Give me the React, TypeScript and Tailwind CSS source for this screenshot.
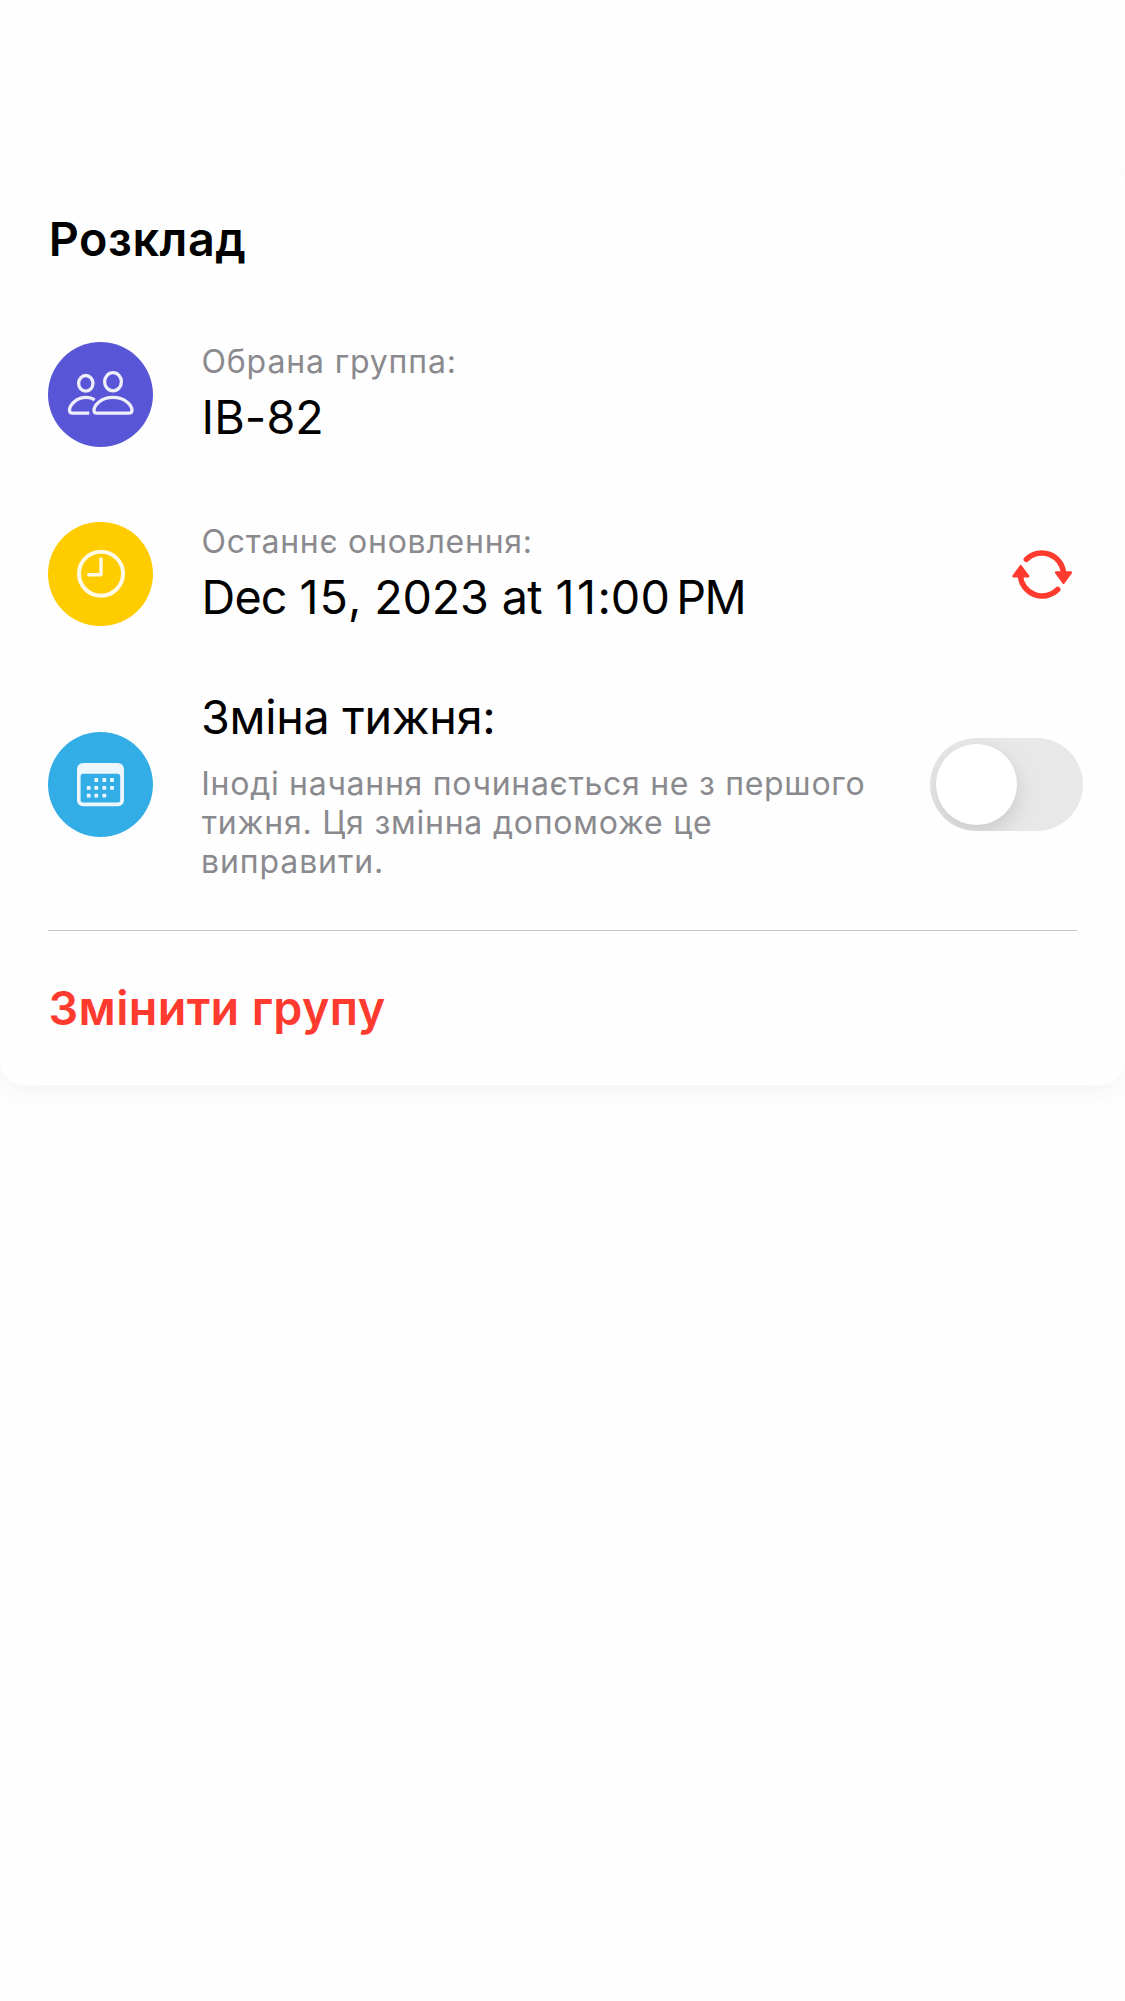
import type { ReactNode } from "react";

function PeopleIcon() {
  return (
    <svg className="h-full w-full" viewBox="0 0 105 105" fill="none" stroke="#eeeefb" strokeWidth="3.3">
      <ellipse cx="37.8" cy="41.3" rx="7.2" ry="7.8" />
      <ellipse cx="65" cy="39.7" rx="8.4" ry="9.1" />
      <path d="M41.3 71.2H24.7C22.6 71.2 21.5 70 21.5 68.2 21.5 63.2 28 55.4 38.3 55.4 41.8 55.4 44.5 56.3 46.6 57.8" />
      <path d="M49 71.2H80.8C82.9 71.2 84 70 84 68.2 84 63.2 77 55.4 65 55.4S46 63.2 46 68.2C46 70 47.1 71.2 49 71.2Z" />
    </svg>
  );
}

function ClockIcon() {
  return (
    <svg className="h-full w-full" viewBox="0 0 105 104" fill="none" stroke="#fffae6" strokeLinecap="round" strokeLinejoin="round">
      <circle cx="53" cy="51.7" r="22" strokeWidth="4" />
      <path d="M53 37V52.7H40.7" strokeWidth="3.4" />
    </svg>
  );
}

const calendarDots = [
  [48.3, 48], [56.3, 48], [64, 48],
  [40.7, 55.9], [48.3, 55.9], [56.3, 55.9], [64, 55.9],
  [40.7, 63.7], [48.3, 63.7], [56.3, 63.7],
];

function CalendarIcon() {
  return (
    <svg className="h-full w-full" viewBox="0 0 105 105">
      <rect x="29" y="31" width="47" height="43.2" rx="6" fill="#ebf7fd" />
      <rect x="32.6" y="41.7" width="39.6" height="28.8" rx="2.5" fill="#32ade6" />
      {calendarDots.map(([x, y]) => (
        <rect key={`${x}-${y}`} x={x - 1.9} y={y - 1.9} width="3.8" height="3.8" rx="0.6" fill="#ebf7fd" />
      ))}
    </svg>
  );
}

function RefreshIcon() {
  return (
    <svg className="h-[51px] w-[60px]" viewBox="22 29 60 51" fill="none" stroke="#ff3b30" strokeLinecap="round" strokeLinejoin="round">
      <path d="M36.3 39.4A21.8 21.8 0 0 1 73.6 53.5" strokeWidth="5.5" />
      <path d="M67.8 69.4A21.8 21.8 0 0 1 30.4 55.5" strokeWidth="5.5" />
      <path d="M66.1 52.5H80.9L73.5 62.7ZM23.5 56.3H38.2L30.7 46.1Z" fill="#ff3b30" strokeWidth="2.4" />
    </svg>
  );
}

function Row({ icon, badge, children, action }: { icon: ReactNode; badge: string; children: ReactNode; action?: ReactNode }) {
  return (
    <div className="flex items-start">
      <div className={`w-[105px] shrink-0 rounded-full ${badge}`}>{icon}</div>
      <div className="ml-12 min-w-0 flex-1 whitespace-nowrap">{children}</div>
      {action}
    </div>
  );
}

const label = "text-[32px] leading-[39px] text-[#8a8a8e]";
const value = "text-[46.7px] leading-[56px] text-black";

export default function App() {
  return (
    <div className="min-h-[2001px] overflow-hidden bg-[#fefefe] pt-[162px] font-['Inter','Liberation_Sans',sans-serif]">
      <section className="flex h-[923px] flex-col rounded-[24px] bg-[#fefefe] px-12 pt-[49px] shadow-[0_8px_24px_rgba(0,0,0,0.04)]">
        <h1 className="h-[56px] pl-[0.8px] text-[46.7px] leading-[56px] font-semibold tracking-[0.55px] text-black">Розклад</h1>

        <div className="mt-[75px] h-[105px]">
          <Row icon={<PeopleIcon />} badge="h-[105px] bg-[#5856d6]">
            <p className={`${label} pl-[0.5px] tracking-[0.85px]`}>Обрана группа:</p>
            <p className={`${value} mt-2 pl-[0.6px] tracking-[0.08px]`}>IB-82</p>
          </Row>
        </div>

        <div className="mt-[75px] h-[105px]">
          <Row
            icon={<ClockIcon />}
            badge="h-[104px] bg-[#ffcc00]"
            action={
              <button aria-label="Оновити" className="mt-[27px] mr-[5px] block">
                <RefreshIcon />
              </button>
            }
          >
            <p className={`${label} pl-[0.5px] tracking-[0.75px]`}>Останнє оновлення:</p>
            <p className={`${value} mt-2 pl-[0.6px]`}>
              <span className="tracking-[-0.85px] [word-spacing:0.5px]">{"Dec "}</span>
              <span className="tracking-[1.2px] [word-spacing:-2.8px]">{"15, "}</span>
              <span className="tracking-[-0.15px] [word-spacing:0.1px]">{"2023 "}</span>
              <span className="tracking-[-0.9px] [word-spacing:1.6px]">{"at "}</span>
              <span className="tracking-[2.6px]">1</span>
              <span className="tracking-[1.6px]">1</span>
              <span className="tracking-[-0.2px]">:</span>
              <span className="tracking-[0.2px]">00</span>
              <span className="tracking-[-2.5px]">{"\u202f"}</span>
              <span className="tracking-[-1.5px]">PM</span>
            </p>
          </Row>
        </div>

        <div className="mt-[62px] h-[192px]">
          <Row
            icon={<CalendarIcon />}
            badge="mt-[43px] h-[105px] bg-[#32ade6]"
            action={
              <button
                role="switch"
                aria-checked="false"
                aria-label="Зміна тижня"
                className="mt-[49px] mr-[-6px] flex h-[93px] w-[153px] shrink-0 items-center overflow-hidden rounded-full bg-[#e8e8e8] px-[6px]"
              >
                <span className="block h-[81px] w-[81px] rounded-full bg-white shadow-[0_8px_21px_rgba(0,0,0,0.13)]" />
              </button>
            }
          >
            <p className={`${value} tracking-[-0.29px]`}>Зміна тижня:</p>
            <p className={`${label} mt-[19px]`}>
              <span className="block pl-[0.3px] tracking-[0.71px]">Іноді начання починається не з першого</span>
              <span className="block pl-[0.7px] tracking-[0.78px]">тижня. Ця змінна допоможе це</span>
              <span className="block tracking-[0.89px]">виправити.</span>
            </p>
          </Row>
        </div>

        <div className="mt-[49px] h-px shrink-0 bg-[#c6c6c8]" />

        <button className="mt-[49px] self-start pl-[0.5px] text-[46.7px] leading-[56px] font-semibold tracking-[0.36px] text-[#ff3b30]">
          Змінити групу
        </button>
      </section>
    </div>
  );
}
